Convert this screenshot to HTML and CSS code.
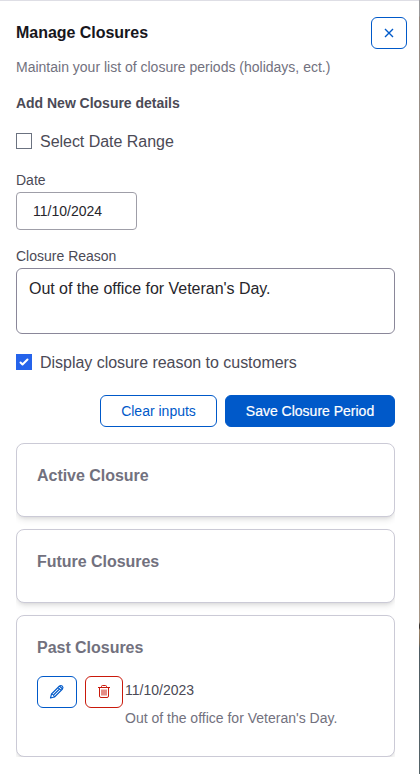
FILE: index.html
```html
<!DOCTYPE html>
<html lang="en">
<head>
    <meta charset="UTF-8">
    <meta name="viewport" content="width=device-width, initial-scale=1.0">
    <title>Manage Closures</title>
    <link rel="stylesheet" href="styles.css">
</head>
<body>
    <main class="panel">
        <header class="panel-header">
            <h1>Manage Closures</h1>
            <button class="btn btn-close" aria-label="Close">
                <svg width="10" height="10" viewBox="0 0 10 10" fill="none" stroke="currentColor" stroke-width="1.4"><path d="M1 1l8 8M9 1L1 9"/></svg>
            </button>
        </header>
        <p class="intro">Maintain your list of closure periods (holidays, ect.)</p>

        <form class="closure-form">
            <h2>Add New Closure details</h2>
            <label class="check">
                <input type="checkbox">
                <span>Select Date Range</span>
            </label>
            <label class="field-label" for="closureDate">Date</label>
            <input class="date-input" type="text" id="closureDate" value="11/10/2024">
            <label class="field-label" for="closureReason">Closure Reason</label>
            <textarea id="closureReason" spellcheck="false">Out of the office for Veteran's Day.</textarea>
            <label class="check check-display">
                <input type="checkbox" checked>
                <svg class="tick" width="16" height="16" viewBox="0 0 16 16" fill="#fff"><path d="M12.207 4.793a1 1 0 010 1.414l-5 5a1 1 0 01-1.414 0l-2-2a1 1 0 011.414-1.414L6.5 9.086l4.293-4.293a1 1 0 011.414 0z"/></svg>
                <span>Display closure reason to customers</span>
            </label>
            <div class="form-actions">
                <button type="button" class="btn btn-clear">Clear inputs</button>
                <button type="button" class="btn btn-save">Save Closure Period</button>
            </div>
        </form>

        <section class="closure-list">
            <div class="card">
                <h3>Active Closure</h3>
            </div>
            <div class="card">
                <h3>Future Closures</h3>
            </div>
            <div class="card card-past">
                <h3>Past Closures</h3>
                <div class="closure">
                    <button class="btn btn-edit" aria-label="Edit">
                        <svg width="16" height="16" viewBox="0 0 16 16" fill="none" stroke="currentColor" stroke-width="1.1" stroke-linejoin="round"><path d="M1.500 14l1-4L10.500 2q1.500-1.100 2.800.200 1.300 1.300.200 2.800l-8 8zM2.500 10q2.300.500 3 3M9 3.500l3 3M10.500 2l3 3M4.500 11l5.500-5.500"/></svg>
                    </button>
                    <button class="btn btn-delete" aria-label="Delete">
                        <svg width="12" height="16" viewBox="0 0 12 16" fill="none" stroke="currentColor"><path d="M0 3.500h12M3.500 3.500v-1q0-1 1-1h3q1 0 1 1v1M1.500 3.500v8.500q0 1.500 1.500 1.500h6q1.500 0 1.500-1.500V3.500M4 5.500v6M6 5.500v6M8 5.500v6"/></svg>
                    </button>
                    <div class="closure-text">
                        <p class="closure-date">11/10/2023</p>
                        <p class="closure-reason">Out of the office for Veteran's Day.</p>
                    </div>
                </div>
            </div>
        </section>
    </main>
</body>
</html>
```
FILE: styles.css
```css
* {
    box-sizing: border-box;
}
body {
    margin: 0;
    font-family: "Liberation Sans", Arial, sans-serif;
    font-size: 14px;
    line-height: 20px;
    color: #4b4a56;
    background: linear-gradient(#9a9a9c 0, #9a9a9c 16px, #958b84 17px, #a39484 622px, #35302c 625px, #35302c 628px, #9a8468 630px, #7a6a55 643px, #4c5a60 648px, #566469 774px);
}
h1, h2, h3, p {
    margin: 0;
}
button, input, textarea {
    font: inherit;
}
.panel {
    width: 419px;
    height: 774px;
    padding: 16px 24px 17px 16px;
    border-top: 1px solid #dedee5;
    background: #fff;
}
.panel-header {
    display: flex;
    justify-content: space-between;
    margin-right: -12px;
}
h1 {
    font-size: 16px;
    line-height: 32px;
    letter-spacing: -0.03px;
    color: #17161c;
}
.btn {
    display: flex;
    align-items: center;
    justify-content: center;
    height: 32px;
    padding: 0;
    border: 1px solid #0059c9;
    border-radius: 6px;
    background: #fff;
    color: #0059c9;
}
.btn-close {
    width: 36px;
}
.intro {
    margin-top: 8px;
    color: #72717e;
}
h2 {
    margin-top: 16px;
    font-size: 14px;
    line-height: 20px;
    letter-spacing: -0.02px;
}
.check {
    display: flex;
    align-items: center;
    gap: 8px;
    height: 24px;
    margin-top: 16px;
    font-size: 16px;
    line-height: 24px;
    letter-spacing: -0.03px;
}
.check span {
    padding-top: 2px;
}
.check input {
    appearance: none;
    width: 16px;
    height: 16px;
    margin: 0;
    border: 1px solid #6b7280;
    background: #fff;
}
.check input:checked {
    border-color: #2563eb;
    background: #2563eb;
}
.check .tick {
    margin-left: -24px;
}
.field-label {
    display: block;
    margin-top: 17px;
}
.date-input {
    display: block;
    width: 121px;
    height: 38px;
    margin-top: 2px;
    padding: 0 16px;
    border: 1px solid #9f9ea8;
    border-radius: 4px;
    color: #27262c;
}
.date-input + .field-label {
    margin-top: 16px;
}
textarea {
    display: block;
    width: 100%;
    height: 66px;
    margin-top: 2px;
    padding: 8px 12px;
    border: 1px solid #8a8799;
    border-radius: 6px;
    font-size: 16px;
    line-height: 24px;
    letter-spacing: -0.03px;
    color: #27262c;
    resize: none;
}
.form-actions {
    display: flex;
    justify-content: flex-end;
    gap: 8px;
    margin-top: 21px;
}
.btn-clear {
    width: 117px;
}
.btn-save {
    width: 170px;
    background: #0059c9;
    color: #fff;
    -webkit-text-stroke: 0.2px #fff;
}
.closure-list {
    display: grid;
    gap: 12px;
    margin-top: 16px;
    overflow: hidden;
}
.card {
    height: 74px;
    padding: 20px;
    border: 1px solid #cbcad6;
    border-radius: 8px;
    background: #fff;
    box-shadow: 0 4px 6px -1px rgba(0, 0, 0, 0.1), 0 2px 4px -2px rgba(0, 0, 0, 0.1);
}
.card-past {
    height: 142px;
}
h3 {
    font-size: 16px;
    line-height: 24px;
    letter-spacing: -0.03px;
    color: #72717e;
}
.closure {
    display: flex;
    align-items: flex-start;
    margin-top: 16px;
}
.btn-edit {
    width: 40px;
    margin-right: 8px;
}
.btn-delete {
    width: 38px;
    border-color: #c9190b;
    color: #c9190b;
}
.closure-text {
    margin: 4px 0 0 2px;
}
.closure-reason {
    margin-top: 8px;
    color: #72717e;
}
```
